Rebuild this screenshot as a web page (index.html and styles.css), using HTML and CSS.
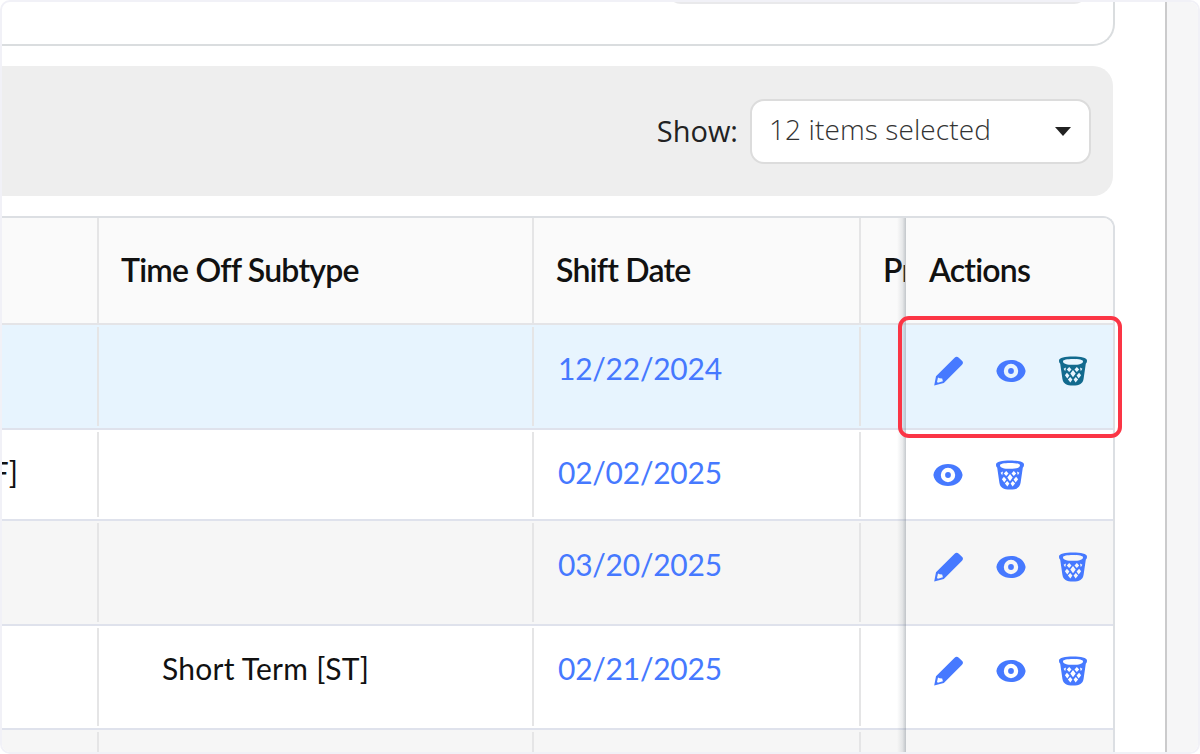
FILE: index.html
```html
<!DOCTYPE html>
<html lang="en">
<head>
  <meta charset="UTF-8" />
  <meta name="viewport" content="width=device-width, initial-scale=1" />
  <title>Time Off</title>
  <link rel="stylesheet" href="styles.css">
</head>
<body>

<!-- icons -->
<svg class="sprite" width="0" height="0">
  <symbol id="pencil" viewBox="0 0 30 30">
    <path fill-rule="evenodd" d="M0.2 29.6 2 20.2 20.6 1.8Q22.6 -0.2 24.8 1.8L28.2 5Q29.8 6.8 28 8.8L9.8 26.9ZM4 21.4 3 26 4 26.8 8.9 25.2 8.2 22.4 5.6 22.2Z"/>
  </symbol>
  <symbol id="eye" viewBox="0 0 30 30">
    <path fill-rule="evenodd" d="M0.4 15C1.4 8.2 7.2 4 15 4S28.6 8.2 29.6 15C28.6 21.8 22.8 26 15 26S1.4 21.8 0.4 15ZM15 7.8A7.2 7.2 0 1 0 15 22.2A7.2 7.2 0 1 0 15 7.8Z"/>
    <circle cx="15" cy="15" r="2.9"/>
  </symbol>
  <symbol id="trash" viewBox="0 0 30 30">
    <path fill-rule="evenodd" d="M1 4.6C1 1.8 7 .6 15 .6S29 1.8 29 4.6C29 6.3 28.6 7 27.8 7.8L25.6 22.8C24.8 27.7 21.5 29.6 15 29.6S5.2 27.7 4.4 22.8L2.2 7.8C1.4 7 1 6.3 1 4.6ZM5 5.2C5 7.9 9 8.8 15 8.8S25 7.9 25 5.2C25 3.8 21 3 15 3S5 3.8 5 5.2Z"/>
    <g class="holes">
      <path d="M5.6 12.8 8 11.6 7.2 15.2ZM24.4 12.8 22 11.6 22.8 15.2Z"/>
      <path d="M11.2 11 13.5 13.4 11.2 16 8.8 13.6ZM18.8 11 21.2 13.6 18.8 16 16.5 13.4Z"/>
      <path d="M15 14 17.7 17.6 15 21.2 12.3 17.6ZM8.9 16.8 11.4 19.6 9.3 22.6 6.9 19.2ZM21.1 16.8 23.1 19.2 20.7 22.6 18.6 19.6Z"/>
      <path d="M12.2 21 14.4 23.6 12.4 26.4 9.9 23.6ZM17.8 21 20.1 23.6 17.6 26.4 15.6 23.6Z"/>
    </g>
  </symbol>
</svg>

<div class="frame">
  <main class="content">
    <div class="panel"><div class="panel-inner"></div></div>

    <div class="toolbar">
      <label class="show-label">Show:</label>
      <div class="select">
        <span>12 items selected</span>
        <i class="caret"></i>
      </div>
    </div>

    <div class="table">
      <div class="row head">
        <div class="cell"></div>
        <div class="cell">Time Off Subtype</div>
        <div class="cell">Shift Date</div>
        <div class="cell clipped">Pr</div>
        <div class="cell actions">Actions</div>
      </div>
      <div class="row selected">
        <div class="cell"></div>
        <div class="cell"></div>
        <div class="cell date">12/22/2024</div>
        <div class="cell clipped"></div>
        <div class="cell actions">
          <svg class="icon"><use href="#pencil"/></svg>
          <svg class="icon"><use href="#eye"/></svg>
          <svg class="icon active"><use href="#trash"/></svg>
          <div class="highlight"></div>
        </div>
      </div>
      <div class="row short">
        <div class="cell type"><span>[F]</span></div>
        <div class="cell"></div>
        <div class="cell date">02/02/2025</div>
        <div class="cell clipped"></div>
        <div class="cell actions">
          <svg class="icon"><use href="#eye"/></svg>
          <svg class="icon"><use href="#trash"/></svg>
        </div>
      </div>
      <div class="row striped">
        <div class="cell"></div>
        <div class="cell"></div>
        <div class="cell date">03/20/2025</div>
        <div class="cell clipped"></div>
        <div class="cell actions">
          <svg class="icon"><use href="#pencil"/></svg>
          <svg class="icon"><use href="#eye"/></svg>
          <svg class="icon"><use href="#trash"/></svg>
        </div>
      </div>
      <div class="row last">
        <div class="cell"></div>
        <div class="cell subtype">Short Term [ST]</div>
        <div class="cell date">02/21/2025</div>
        <div class="cell clipped"></div>
        <div class="cell actions">
          <svg class="icon"><use href="#pencil"/></svg>
          <svg class="icon"><use href="#eye"/></svg>
          <svg class="icon"><use href="#trash"/></svg>
        </div>
      </div>
      <div class="row striped">
        <div class="cell"></div>
        <div class="cell"></div>
        <div class="cell"></div>
        <div class="cell clipped"></div>
        <div class="cell actions"></div>
      </div>
    </div>
  </main>
  <aside class="side"></aside>
</div>

</body>
</html>
```
FILE: styles.css
```css
* {
  box-sizing: border-box;
}

body {
  margin: 0;
  background: #fff;
  color: #111;
  font-family: Lato, sans-serif;
  font-size: 30px;
  overflow: hidden;
}

.sprite {
  position: absolute;
}

.frame {
  display: flex;
  width: 1200px;
  height: 754px;
  border: 2px solid #f1f1f7;
  border-radius: 10px;
  overflow: hidden;
}

.content {
  width: 1163px;
  flex: none;
}

.side {
  flex: 1;
  background: #f6f6f7;
  border-left: 2px solid #cbcbcc;
}

.panel {
  width: 1113px;
  height: 44px;
  border: solid #dadddf;
  border-width: 0 2px 2px 0;
  border-bottom-right-radius: 22px;
  overflow: hidden;
}

.panel-inner {
  width: 421px;
  height: 22px;
  margin: -20px 0 0 665px;
  background: #e9e9eb;
  border-radius: 0 0 14px 14px;
}

.toolbar {
  display: flex;
  align-items: center;
  justify-content: flex-end;
  width: 1111px;
  height: 130px;
  margin: 20px 0;
  padding-right: 22px;
  background: #eee;
  border-radius: 0 20px 20px 0;
  font-family: "Open Sans", sans-serif;
  font-size: 28px;
}

.show-label {
  margin: 0 12px 2px 0;
  color: #222;
  font-size: 29px;
}

.select {
  display: flex;
  align-items: center;
  justify-content: space-between;
  width: 341px;
  height: 65px;
  margin-top: 1px;
  padding: 0 18px 5px 17px;
  border: 2px solid #dcdcdc;
  border-radius: 14px;
  background: #fff;
  color: #333;
  font-weight: 300;
  letter-spacing: 0.1px;
}

.caret {
  margin-top: 5px;
  border: 8px solid transparent;
  border-top: 9px solid #222;
  border-bottom: 0;
}

.table {
  width: 1113px;
  border: solid #dcdfe3;
  border-width: 2px 2px 0 0;
  border-top-right-radius: 12px;
}

.row {
  display: grid;
  grid-template-columns: 97px 435px 327px 44px 208px;
  height: 105px;
  border-bottom: 2px solid #dfe2ec;
  background: #fff;
  line-height: 36px;
}

.row.short {
  height: 91px;
}

.row.last {
  height: 104px;
}

.row.striped {
  background: #f6f6f6;
}

.row.selected {
  background: #e7f4fe;
}

.row.head {
  height: 107px;
  border-bottom-color: #e4e4e7;
  border-top-right-radius: 10px;
  background: #fafafa;
  font-weight: 600;
  font-size: 32px;
  letter-spacing: -0.8px;
}

.cell {
  margin: 2px 0;
  padding: 22px 22px;
  border-right: 2px solid #e5e5e6;
  white-space: nowrap;
}

.head .cell {
  margin: 0;
  padding-top: 34px;
}

.cell.date {
  padding-left: 24px;
  color: #4679ff;
  letter-spacing: -0.25px;
}

.selected .date,
.striped .date {
  padding-top: 23px;
}

.cell.subtype {
  padding-left: 63px;
  letter-spacing: 0.25px;
}

.cell.type {
  display: flex;
  justify-content: flex-end;
  padding: 22px 79px 0 0;
  overflow: hidden;
}

.cell.clipped {
  margin: 0;
  border-right: 0;
  padding-right: 0;
  overflow: hidden;
}

.cell.actions {
  position: relative;
  display: flex;
  gap: 32px;
  margin: 0;
  padding-left: 29px;
  border-right: 0;
  border-top-right-radius: inherit;
  background: inherit;
}

.cell.actions::before {
  content: "";
  position: absolute;
  left: -8px;
  top: 0;
  bottom: -2px;
  width: 9px;
  background: linear-gradient(to right, rgba(110, 120, 130, 0), rgba(110, 120, 130, 0.14) 60%, rgba(110, 120, 130, 0.4));
}

.head .actions {
  padding-left: 24px;
}

.short .actions {
  padding-left: 28px;
}

.icon {
  width: 30px;
  height: 30px;
  margin-top: 9px;
  fill: #4679ff;
  color: #fff;
}

.short .icon,
.last .icon {
  margin-top: 8px;
}

.icon.active {
  fill: #126a8e;
  color: #e7f4fe;
}

.striped .icon {
  color: #f6f6f6;
}

.holes {
  fill: currentColor;
}

/* marker round the row actions */
.highlight {
  position: absolute;
  z-index: 2;
  left: -7px;
  top: -9px;
  width: 224px;
  height: 122px;
  border: 4px solid #fb3545;
  border-radius: 11px;
}
```
